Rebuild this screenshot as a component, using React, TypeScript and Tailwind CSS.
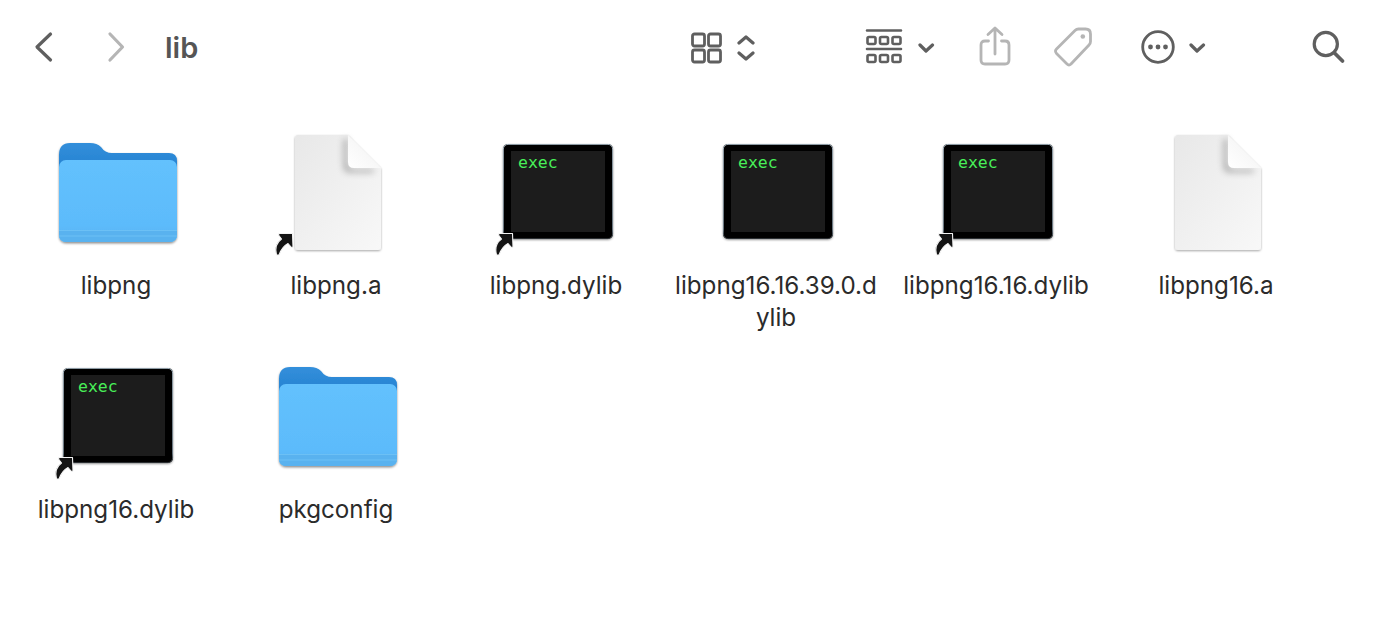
import React from "react";

const ink = "#5f5f5f";
const dim = "#b5b5b5";

function Tool({ w, ml, children }: { w: number; ml: string; children: React.ReactNode }) {
  return (
    <svg width={w} height={44} viewBox={`0 0 ${w} 44`} fill="none" strokeLinecap="round" strokeLinejoin="round" className={`block shrink-0 ${ml}`}>
      {children}
    </svg>
  );
}

function Chevron() {
  return (
    <Tool w={17} ml="">
      <path d="M2 20 L8 26 L14.5 20" stroke={ink} strokeWidth="3.2" />
    </Tool>
  );
}

function Toolbar() {
  return (
    <div className="flex h-[94px] items-center pl-[30px]">
      <div className="flex w-[660px] shrink-0 items-center">
        <Tool w={26} ml="">
          <path d="M20.5 9 L7 22 L20.5 35" stroke={ink} strokeWidth="3.2" />
        </Tool>
        <Tool w={24} ml="ml-[48px]">
          <path d="M6 9 L18.5 22 L6 35" stroke={dim} strokeWidth="3.2" />
        </Tool>
        <span className="ml-[37px] text-[29px] font-semibold leading-none text-[#555555] [font-family:Inter,sans-serif]">lib</span>
      </div>
      <Tool w={34} ml="">
        <g stroke={ink} strokeWidth="2.8">
          <rect x="2.5" y="9" width="12" height="12" rx="2" />
          <rect x="18.5" y="9" width="12" height="12" rx="2" />
          <rect x="2.5" y="25" width="12" height="12" rx="2" />
          <rect x="18.5" y="25" width="12" height="12" rx="2" />
        </g>
      </Tool>
      <Tool w={18} ml="ml-[13px]">
        <path d="M2 18 L9 12 L16 18 M2 28 L9 34 L16 28" stroke={ink} strokeWidth="3.2" />
      </Tool>
      <Tool w={38} ml="ml-[110px]">
        <g stroke={ink} strokeWidth="2.6">
          <path d="M2 5.5 H36 M2 24 H36" />
          <rect x="2.5" y="12" width="8" height="7" rx="1.5" />
          <rect x="15" y="12" width="8" height="7" rx="1.5" />
          <rect x="27.5" y="12" width="8" height="7" rx="1.5" />
          <rect x="2.5" y="30" width="8" height="7" rx="1.5" />
          <rect x="15" y="30" width="8" height="7" rx="1.5" />
          <rect x="27.5" y="30" width="8" height="7" rx="1.5" />
        </g>
      </Tool>
      <div className="ml-[15px]"><Chevron /></div>
      <Tool w={34} ml="ml-[43px]">
        <g stroke={dim} strokeWidth="2.8">
          <path d="M10.5 16 H7 Q3 16 3 20 V35 Q3 39 7 39 H27 Q31 39 31 35 V20 Q31 16 27 16 H23.5" />
          <path d="M17 29 V3.5 M10 9.5 L17 3 L24 9.5" />
        </g>
      </Tool>
      <Tool w={40} ml="ml-[41px]">
        <path d="M3.5 24 L22 5.5 Q23.5 4 25.5 4 H32.5 Q37.5 4 37.5 9 V16.5 Q37.5 18.5 36 20 L18 39 Q16 41 14 39 L3.5 28.5 Q1.5 26 3.5 24 Z" stroke={dim} strokeWidth="2.8" />
        <circle cx="29.8" cy="11.5" r="2.3" fill={dim} />
      </Tool>
      <Tool w={36} ml="ml-[47px]">
        <circle cx="18" cy="22" r="15.3" stroke={ink} strokeWidth="2.8" />
        <circle cx="10.5" cy="22" r="2.4" fill={ink} />
        <circle cx="18" cy="22" r="2.4" fill={ink} />
        <circle cx="25.5" cy="22" r="2.4" fill={ink} />
      </Tool>
      <div className="ml-[13px]"><Chevron /></div>
      <Tool w={36} ml="ml-[104px]">
        <circle cx="15.8" cy="19" r="11.6" stroke={ink} strokeWidth="3.2" />
        <path d="M24.5 28 L32.5 36" stroke={ink} strokeWidth="3.8" />
      </Tool>
    </div>
  );
}

function Alias() {
  return (
    <svg x="3" y="102" width="22" height="26" viewBox="0 0 22 26">
      <path d="M3.5 25 C1.5 17 3.5 12.5 8.5 9 L5.5 5 L6 3.5 H19.5 L20 17 L18.5 17.5 L15 13.5 C11 15.5 8 19.5 6 25 Z" fill="#141414" stroke="#f4f4f4" strokeWidth="1.1" strokeLinejoin="round" />
    </svg>
  );
}

function FolderIcon() {
  return (
    <svg width="132" height="128" viewBox="0 0 132 128" className="block">
      <defs>
        <linearGradient id="fb" x1="0" y1="0" x2="0" y2="1">
          <stop offset="0" stopColor="#338fdb" />
          <stop offset="1" stopColor="#1a78c9" />
        </linearGradient>
        <linearGradient id="ff" x1="0" y1="0" x2="0" y2="1">
          <stop offset="0" stopColor="#63c1fd" />
          <stop offset="0.8" stopColor="#5cbbfb" />
          <stop offset="1" stopColor="#56b1ef" />
        </linearGradient>
        <filter id="fs" x="-10%" y="-10%" width="120%" height="125%">
          <feDropShadow dx="0" dy="1.4" stdDeviation="1.3" floodColor="#000" floodOpacity="0.45" />
        </filter>
      </defs>
      <g filter="url(#fs)">
        <path d="M9 27 Q9 15 20 15 H40 Q47 15 51 19 Q55 25 62 25 H119 Q127 25 127 33 V60 H9 Z" fill="url(#fb)" />
        <rect x="9" y="32" width="118" height="82" rx="7" fill="url(#ff)" />
      </g>
      <path d="M9 102 H127 V107 Q127 114 120 114 H16 Q9 114 9 107 Z" fill="#59b2ef" />
      <path d="M9 102.5 H127 M9 108 H127" stroke="#6cc0f5" strokeWidth="1" />
    </svg>
  );
}

function DocIcon({ alias }: { alias?: boolean }) {
  return (
    <svg width="132" height="128" viewBox="0 0 132 128" className="block">
      <defs>
        <linearGradient id="dg" x1="0" y1="0" x2="1" y2="1">
          <stop offset="0" stopColor="#e8e8e8" />
          <stop offset="1" stopColor="#f8f8f8" />
        </linearGradient>
        <linearGradient id="dfold" x1="0" y1="1" x2="1" y2="0">
          <stop offset="0" stopColor="#ffffff" />
          <stop offset="0.6" stopColor="#f6f6f6" />
          <stop offset="1" stopColor="#e2e2e2" />
        </linearGradient>
        <filter id="ds" x="-10%" y="-10%" width="120%" height="120%">
          <feDropShadow dx="0" dy="1" stdDeviation="0.9" floodColor="#000" floodOpacity="0.35" />
        </filter>
        <filter id="blur2" x="-40%" y="-40%" width="180%" height="180%">
          <feGaussianBlur stdDeviation="3" />
        </filter>
      </defs>
      <path d="M28 7 H78 L111 40 V119 Q111 122 108 122 H28 Q25 122 25 119 V10 Q25 7 28 7 Z" fill="url(#dg)" filter="url(#ds)" />
      <path d="M78 10 V34 Q78 41 85 41 H106 L102 45 H80 Q73 45 73 38 V12 Z" fill="#7a7a7a" opacity="0.5" filter="url(#blur2)" />
      <path d="M78 7 L111 40 H84 Q78 40 78 34 Z" fill="url(#dfold)" />
      {alias && <Alias />}
    </svg>
  );
}

function ExecIcon({ alias }: { alias?: boolean }) {
  return (
    <svg width="132" height="128" viewBox="0 0 132 128" className="block">
      <defs>
        <filter id="es" x="-10%" y="-10%" width="120%" height="120%">
          <feDropShadow dx="0" dy="1" stdDeviation="0.9" floodColor="#000" floodOpacity="0.4" />
        </filter>
        <filter id="eb" x="-5%" y="-5%" width="110%" height="110%">
          <feGaussianBlur stdDeviation="0.7" />
        </filter>
        <linearGradient id="eedge" x1="0" y1="0" x2="0" y2="1">
          <stop offset="0" stopColor="#c6d9e6" />
          <stop offset="0.9" stopColor="#93a6b4" />
          <stop offset="1" stopColor="#3a3f44" />
        </linearGradient>
      </defs>
      <rect x="13" y="16" width="110" height="95" rx="5" fill="#040404" filter="url(#es)" />
      <rect x="13.4" y="16.4" width="109.2" height="94.2" rx="4.6" fill="none" stroke="url(#eedge)" strokeWidth="0.8" />
      <rect x="21" y="23" width="94" height="81" fill="#1c1c1c" filter="url(#eb)" />
      <text x="28" y="40" fontSize="16.5" fill="#48ee58" fontFamily="'DejaVu Sans Mono', monospace">exec</text>
      {alias && <Alias />}
    </svg>
  );
}

const items: { kind: "folder" | "doc" | "exec"; alias?: boolean; lines: string[] }[] = [
  { kind: "folder", lines: ["libpng"] },
  { kind: "doc", alias: true, lines: ["libpng.a"] },
  { kind: "exec", alias: true, lines: ["libpng.dylib"] },
  { kind: "exec", lines: ["libpng16.16.39.0.d", "ylib"] },
  { kind: "exec", alias: true, lines: ["libpng16.16.dylib"] },
  { kind: "doc", lines: ["libpng16.a"] },
  { kind: "exec", alias: true, lines: ["libpng16.dylib"] },
  { kind: "folder", lines: ["pkgconfig"] },
];

export default function App() {
  return (
    <div className="h-[622px] w-[1382px] overflow-hidden bg-white [font-family:Inter,sans-serif]">
      <Toolbar />
      <div className="mt-[34px] grid grid-cols-[repeat(6,220px)] auto-rows-[224px] pl-[6px]">
        {items.map((it, i) => (
          <div key={i} className="flex flex-col items-center">
            {it.kind === "folder" && <FolderIcon />}
            {it.kind === "doc" && <DocIcon alias={it.alias} />}
            {it.kind === "exec" && <ExecIcon alias={it.alias} />}
            <div className="mt-[14px] whitespace-nowrap text-center text-[24.2px] leading-[32px] text-[#2b2b2b]">
              {it.lines.map((l) => (
                <div key={l}>{l}</div>
              ))}
            </div>
          </div>
        ))}
      </div>
    </div>
  );
}
